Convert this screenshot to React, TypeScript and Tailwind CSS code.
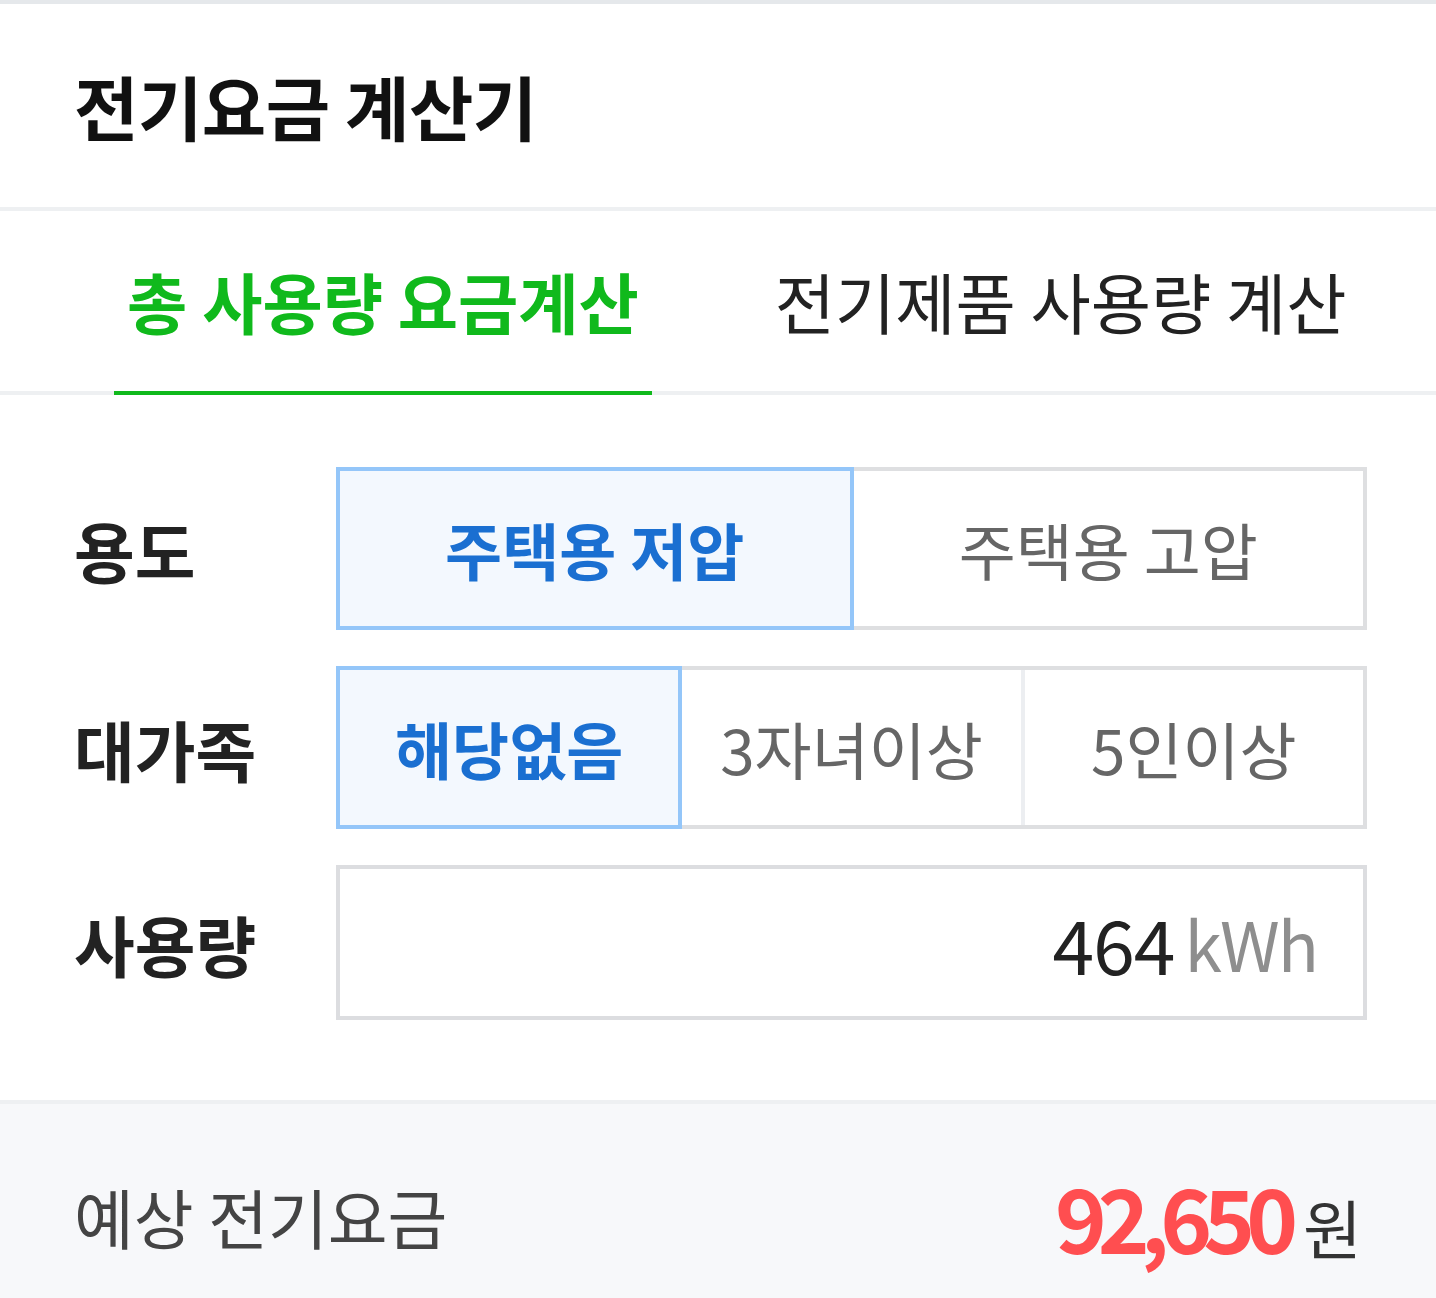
import * as React from 'react';

const FONT = "font-['Noto_Sans_CJK_KR','Noto_Sans',sans-serif]";

type Option = { label: string };

const USAGE: Option[] = [{ label: '주택용 저압' }, { label: '주택용 고압' }];
const FAMILY: Option[] = [{ label: '해당없음' }, { label: '3자녀이상' }, { label: '5인이상' }];

function Segmented({
  options,
  selected,
  onSelect,
}: {
  options: Option[];
  selected: number;
  onSelect: (i: number) => void;
}) {
  return (
    <div className="flex h-[163px] border-4 border-[#dedfe1] bg-white">
      {options.map((opt, i) => {
        const active = i === selected;
        return (
          <button
            key={opt.label}
            onClick={() => onSelect(i)}
            className={
              active
                ? 'relative z-10 -m-[4px] flex flex-1 items-center justify-center border-4 border-[#94c6f9] bg-[#f3f8fe] text-[62px] font-bold leading-none text-[#1a6fd1]'
                : 'flex flex-1 items-center justify-center border-l-4 border-[#eceef1] text-[62px] font-normal leading-none text-[#666666] first:border-l-0'
            }
          >
            {opt.label}
          </button>
        );
      })}
    </div>
  );
}

function Row({ label, children }: { label: string; children: React.ReactNode }) {
  return (
    <div className="flex items-center">
      <div className="w-[262px] shrink-0 text-[66px] font-bold leading-none text-[#222222]">{label}</div>
      <div className="flex-1">{children}</div>
    </div>
  );
}

export default function App() {
  const [tab, setTab] = React.useState(0);
  const [usage, setUsage] = React.useState(0);
  const [family, setFamily] = React.useState(0);

  const tabs = ['총 사용량 요금계산', '전기제품 사용량 계산'];

  return (
    <div className={`${FONT} min-h-[1298px] w-full bg-white`}>
      <div className="border-t-4 border-[#e5e8eb]">
        {/* Header */}
        <header className="flex h-[203px] items-center pl-[74px]">
          <h1 className="text-[70px] font-bold leading-none tracking-[-0.5px] text-[#111111]">전기요금 계산기</h1>
        </header>

        {/* Tabs */}
        <nav className="flex gap-[110px] border-t-4 border-b-4 border-[#eef0f2] pl-[114px]">
          {tabs.map((t, i) => (
            <button
              key={t}
              onClick={() => setTab(i)}
              className={
                i === tab
                  ? '-mb-[4px] flex h-[184px] items-center border-b-4 border-[#10b91c] px-[13px] text-[65.5px] font-bold leading-none text-[#10b91c]'
                  : '-mb-[4px] flex h-[184px] items-center border-b-4 border-transparent px-[13px] text-[65.5px] font-normal leading-none text-[#222222]'
              }
            >
              {t}
            </button>
          ))}
        </nav>

        {/* Form */}
        <section className="flex flex-col gap-[36px] pt-[72px] pb-[80px] pl-[74px] pr-[69px]">
          <Row label="용도">
            <Segmented options={USAGE} selected={usage} onSelect={setUsage} />
          </Row>
          <Row label="대가족">
            <Segmented options={FAMILY} selected={family} onSelect={setFamily} />
          </Row>
          <Row label="사용량">
            <div className="flex h-[155px] items-center justify-end gap-[10px] border-4 border-[#dcdde0] pr-[46px]">
              <span className="text-[75px] leading-none tracking-[-1px] text-[#222222]">464</span>
              <span className="text-[68px] leading-none tracking-[-2px] text-[#8e8e8e]">kWh</span>
            </div>
          </Row>
        </section>

        {/* Result */}
        <section className="flex items-center justify-between border-t-4 border-[#eef0f2] bg-[#f7f8fa] pt-[68px] pb-[58px] pl-[74px] pr-[74px]">
          <span className="text-[65px] leading-none text-[#444444]">예상 전기요금</span>
          <span className="flex items-baseline gap-[14px]">
            <span className="text-[88px] font-bold leading-none tracking-[-9px] text-[#ff4e50]">92,650</span>
            <span className="text-[64px] leading-none text-[#333333]">원</span>
          </span>
        </section>
      </div>
    </div>
  );
}
